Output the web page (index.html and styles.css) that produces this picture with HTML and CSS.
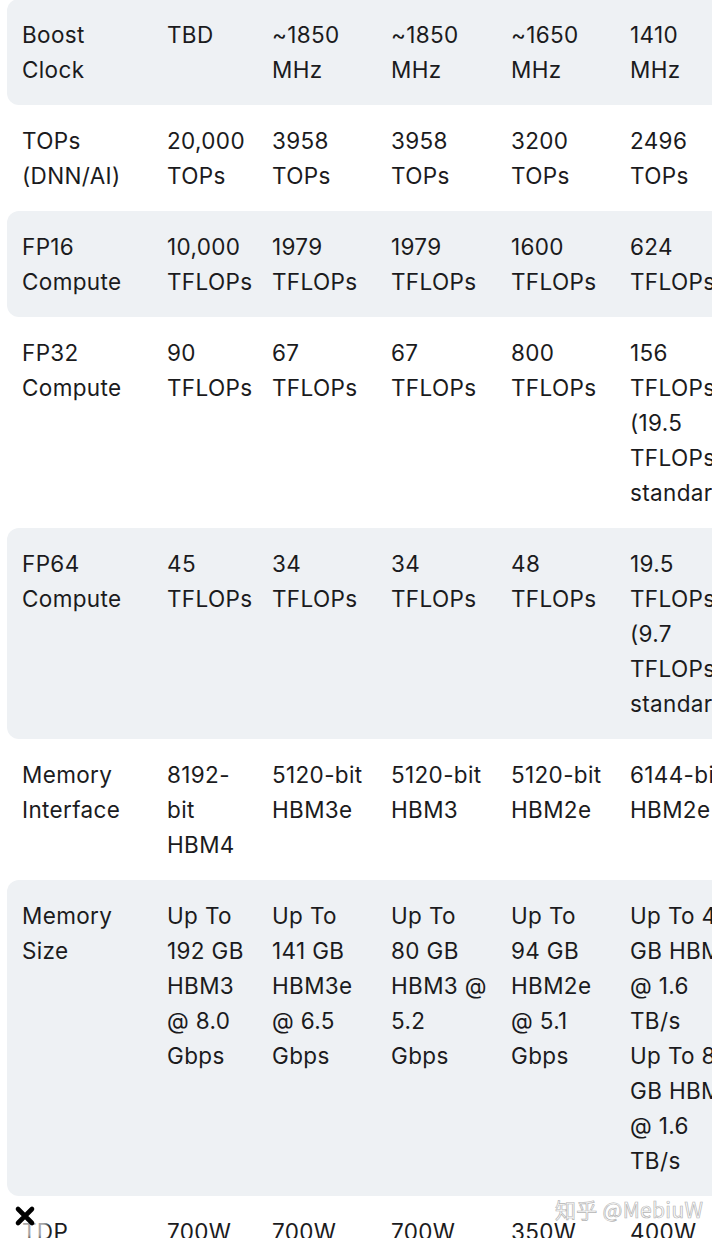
FILE: index.html
```html
<!DOCTYPE html>
<html lang="en">
<head>
<meta charset="utf-8">
<title>GPU spec comparison</title>
<link rel="stylesheet" href="styles.css">
</head>
<body>
<div class="table-wrap">
  <div class="spec-row alt">
    <div class="cell label">Boost<br>Clock</div>
    <div class="cell">TBD</div>
    <div class="cell">~1850<br>MHz</div>
    <div class="cell">~1850<br>MHz</div>
    <div class="cell">~1650<br>MHz</div>
    <div class="cell">1410<br>MHz</div>
  </div>
  <div class="spec-row">
    <div class="cell label">TOPs<br>(DNN/AI)</div>
    <div class="cell">20,000<br>TOPs</div>
    <div class="cell">3958<br>TOPs</div>
    <div class="cell">3958<br>TOPs</div>
    <div class="cell">3200<br>TOPs</div>
    <div class="cell">2496<br>TOPs</div>
  </div>
  <div class="spec-row alt">
    <div class="cell label">FP16<br>Compute</div>
    <div class="cell">10,000<br>TFLOPs</div>
    <div class="cell">1979<br>TFLOPs</div>
    <div class="cell">1979<br>TFLOPs</div>
    <div class="cell">1600<br>TFLOPs</div>
    <div class="cell">624<br>TFLOPs</div>
  </div>
  <div class="spec-row">
    <div class="cell label">FP32<br>Compute</div>
    <div class="cell">90<br>TFLOPs</div>
    <div class="cell">67<br>TFLOPs</div>
    <div class="cell">67<br>TFLOPs</div>
    <div class="cell">800<br>TFLOPs</div>
    <div class="cell">156<br>TFLOPs<br>(19.5<br>TFLOPs<br>standard)</div>
  </div>
  <div class="spec-row alt">
    <div class="cell label">FP64<br>Compute</div>
    <div class="cell">45<br>TFLOPs</div>
    <div class="cell">34<br>TFLOPs</div>
    <div class="cell">34<br>TFLOPs</div>
    <div class="cell">48<br>TFLOPs</div>
    <div class="cell">19.5<br>TFLOPs<br>(9.7<br>TFLOPs<br>standard)</div>
  </div>
  <div class="spec-row">
    <div class="cell label">Memory<br>Interface</div>
    <div class="cell">8192-<br>bit<br>HBM4</div>
    <div class="cell">5120-bit<br>HBM3e</div>
    <div class="cell">5120-bit<br>HBM3</div>
    <div class="cell">5120-bit<br>HBM2e</div>
    <div class="cell">6144-bit<br>HBM2e</div>
  </div>
  <div class="spec-row alt">
    <div class="cell label">Memory<br>Size</div>
    <div class="cell">Up To<br>192 GB<br>HBM3<br>@ 8.0<br>Gbps</div>
    <div class="cell">Up To<br>141 GB<br>HBM3e<br>@ 6.5<br>Gbps</div>
    <div class="cell">Up To<br>80 GB<br>HBM3 @<br>5.2<br>Gbps</div>
    <div class="cell">Up To<br>94 GB<br>HBM2e<br>@ 5.1<br>Gbps</div>
    <div class="cell">Up To 40<br>GB HBM2<br>@ 1.6<br>TB/s<br>Up To 80<br>GB HBM2e<br>@ 1.6<br>TB/s</div>
  </div>
  <div class="spec-row">
    <div class="cell label">TDP</div>
    <div class="cell">700W</div>
    <div class="cell">700W</div>
    <div class="cell">700W</div>
    <div class="cell">350W</div>
    <div class="cell">400W</div>
  </div>
</div>

<div class="close-halo"></div>
<svg class="close-icon" width="22" height="22" viewBox="0 0 22 22" aria-hidden="true">
  <path d="M4 4 L18 18 M18 4 L4 18" stroke="#000" stroke-width="4.6" stroke-linecap="round"/>
</svg>
<div class="watermark">知乎 @MebiuW</div>
</body>
</html>
```

FILE: styles.css
```css
html, body {
  margin: 0;
  padding: 0;
  background: #ffffff;
}

body {
  font-family: Inter, "Noto Sans", "Noto Sans CJK SC", sans-serif;
  color: #1b1b1d;
  font-size: 22.5px;
  letter-spacing: 0.35px;
  line-height: 35px;
  height: 1238px;
  overflow: hidden;
  position: relative;
}

.table-wrap {
  margin: -1px 0 0 7px;
  width: 705px;
  overflow: hidden;
}

.spec-row {
  display: grid;
  grid-template-columns: 145px 105px 119px 120px 119px 140px;
  width: 760px;
  padding: 18px 0 18px 15px;
  border-radius: 12px 0 0 12px;
}

.spec-row.alt {
  background: #eef1f4;
}

.cell {
  white-space: nowrap;
  overflow: hidden;
}

.close-halo {
  position: absolute;
  left: 17px;
  top: 1208px;
  width: 30px;
  height: 30px;
  background: rgba(255, 255, 255, 0.62);
  filter: blur(2px);
}

.close-icon {
  position: absolute;
  left: 14px;
  top: 1205px;
}

.watermark {
  position: absolute;
  left: 555px;
  top: 1195px;
  font-family: "Noto Sans CJK SC", "Noto Sans", sans-serif;
  font-size: 21px;
  line-height: 28px;
  letter-spacing: 0.3px;
  color: rgba(255, 255, 255, 0.85);
  -webkit-text-stroke: 0.7px #b4b4b4;
}
```
